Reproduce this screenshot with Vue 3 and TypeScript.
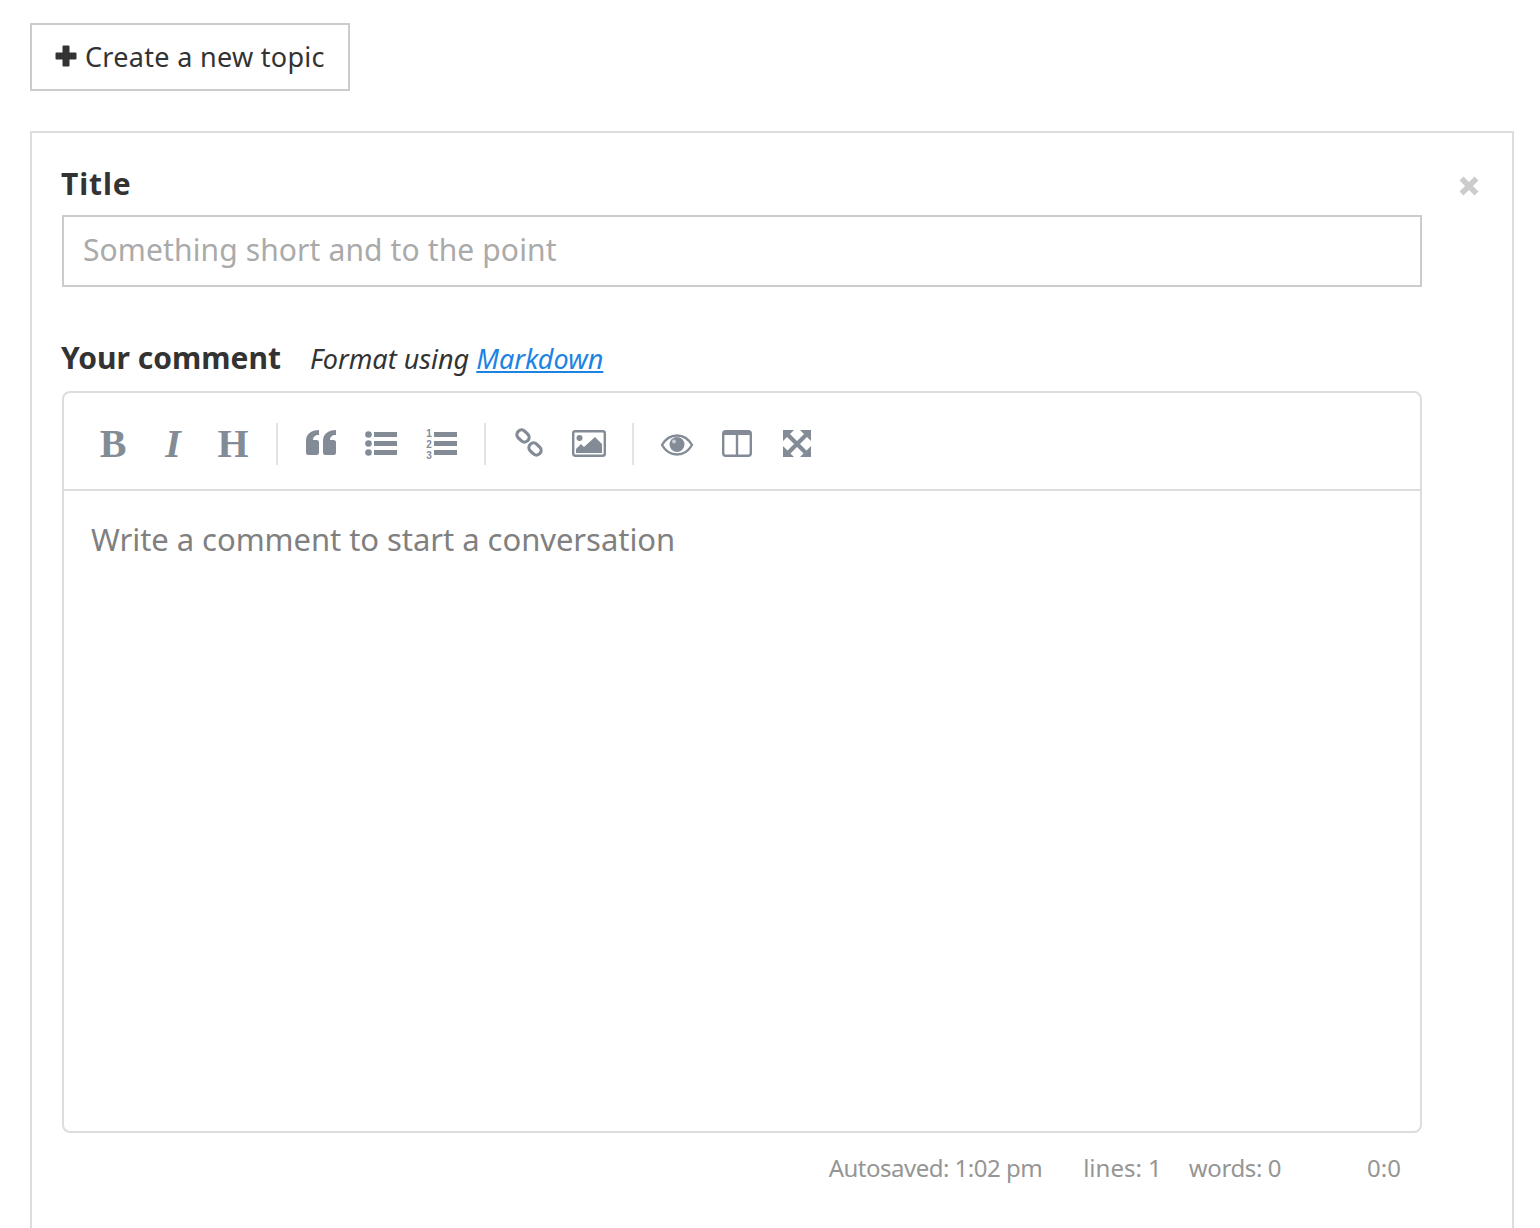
<script setup lang="ts">
const statusItems = [
  { key: 'autosave', text: 'Autosaved: 1:02 pm' },
  { key: 'lines', text: 'lines: 1' },
  { key: 'words', text: 'words: 0' },
  { key: 'cursor', text: '0:0' },
]
</script>

<template>
  <div class="page">
    <button class="new-topic" type="button">
      <svg class="plus" width="22" height="22" viewBox="0 0 22 22">
        <path d="M7.5 1.5a1 1 0 0 1 1-1h5a1 1 0 0 1 1 1v6h6a1 1 0 0 1 1 1v5a1 1 0 0 1-1 1h-6v6a1 1 0 0 1-1 1h-5a1 1 0 0 1-1-1v-6h-6a1 1 0 0 1-1-1v-5a1 1 0 0 1 1-1h6z" fill="#333" />
      </svg>
      <span class="new-topic-text">Create a new topic</span>
    </button>

    <section class="panel">
      <svg class="close" width="20" height="20" viewBox="0 0 20 20">
        <path d="M2.500 2.500l15 15M17.500 2.500l-15 15" stroke="#ccc" stroke-width="5.500" fill="none" />
      </svg>

      <label class="field-label title-label">Title</label>
      <input class="title-input" type="text" placeholder="Something short and to the point" />

      <div class="comment-head">
        <label class="field-label">Your comment</label>
        <em class="hint">Format using <a href="#">Markdown</a></em>
      </div>

      <div class="editor">
        <div class="toolbar">
          <span class="tool glyph bold">B</span>
          <span class="tool glyph italic">I</span>
          <span class="tool glyph bold">H</span>
          <i class="sep"></i>
          <span class="tool">
            <svg width="40" height="40" viewBox="0 0 40 40" fill="#838c96">
              <path d="M18 6v5c-4 0-6 2-6 5h3.500a2.500 2.500 0 0 1 2.500 2.500v10a2.500 2.500 0 0 1-2.500 2.500h-8A2.500 2.500 0 0 1 5 28.500V17C5 10 10 6 18 6z" />
              <path d="M35 6v5c-4 0-6 2-6 5h3.500a2.500 2.500 0 0 1 2.500 2.500v10a2.500 2.500 0 0 1-2.500 2.500h-8a2.500 2.500 0 0 1-2.500-2.500V17C22 10 27 6 35 6z" />
            </svg>
          </span>
          <span class="tool">
            <svg width="40" height="40" viewBox="0 0 40 40" fill="#838c96">
              <circle cx="7.500" cy="10.500" r="3.300" />
              <circle cx="7.500" cy="19.500" r="3.300" />
              <circle cx="7.500" cy="28.500" r="3.300" />
              <rect x="13" y="8" width="23" height="5" />
              <rect x="13" y="17" width="23" height="5" />
              <rect x="13" y="26" width="23" height="5" />
            </svg>
          </span>
          <span class="tool">
            <svg width="40" height="40" viewBox="0 0 40 40" fill="#838c96">
              <text class="num" x="8" y="12.500">1</text>
              <text class="num" x="8" y="23.500">2</text>
              <text class="num" x="8" y="34.500">3</text>
              <rect x="13" y="8" width="23" height="5" />
              <rect x="13" y="17" width="23" height="5" />
              <rect x="13" y="26" width="23" height="5" />
            </svg>
          </span>
          <i class="sep"></i>
          <span class="tool">
            <svg width="40" height="40" viewBox="0 0 40 40" fill="none" stroke="#838c96" stroke-width="3.200">
              <rect x="7.350" y="7.350" width="13.300" height="9.300" rx="4.600" transform="rotate(45 14 12)" />
              <rect x="19.350" y="20.350" width="13.300" height="9.300" rx="4.600" transform="rotate(45 26 25)" />
            </svg>
          </span>
          <span class="tool">
            <svg width="40" height="40" viewBox="0 0 40 40">
              <rect x="4.200" y="7.200" width="31.600" height="24.600" rx="2" fill="none" stroke="#838c96" stroke-width="2.400" />
              <circle cx="10.500" cy="14" r="3" fill="#838c96" />
              <path d="M7 29v-4l5-5 3 3 11-10 7 7v9z" fill="#838c96" />
            </svg>
          </span>
          <i class="sep"></i>
          <span class="tool">
            <svg width="40" height="40" viewBox="0 0 40 40">
              <path d="M5 21C9 14 14 11.500 20 11.500S31 14 35 21C31 28 26 30.500 20 30.500S9 28 5 21z" fill="none" stroke="#838c96" stroke-width="2.400" />
              <circle cx="20" cy="20.500" r="7.500" fill="#838c96" />
              <circle cx="17" cy="17.500" r="2" fill="#c9ced3" />
            </svg>
          </span>
          <span class="tool">
            <svg width="40" height="40" viewBox="0 0 40 40">
              <rect x="6.200" y="7.200" width="27.600" height="24.600" rx="2.500" fill="none" stroke="#838c96" stroke-width="2.400" />
              <rect x="6" y="7" width="28" height="4" fill="#838c96" />
              <rect x="18.800" y="8" width="2.400" height="23" fill="#838c96" />
            </svg>
          </span>
          <span class="tool">
            <svg width="40" height="40" viewBox="0 0 40 40" fill="#838c96">
              <path d="M10 10l20 20M30 10L10 30" stroke="#838c96" stroke-width="4.200" />
              <path d="M6 6h11l-11 11zM34 6H23l11 11zM6 33h11L6 22zM34 33H23l11-11z" />
            </svg>
          </span>
        </div>
        <div class="editor-body">Write a comment to start a conversation</div>
      </div>

      <div class="status">
        <span v-for="item in statusItems" :key="item.key" :class="item.key">{{ item.text }}</span>
      </div>
    </section>
  </div>
</template>

<style scoped>
.page {
  box-sizing: border-box;
  height: 1228px;
  overflow: hidden;
  padding: 23px 26px 0 30px;
  font-family: "Noto Sans", sans-serif;
  color: #333;
}

.new-topic {
  display: flex;
  align-items: center;
  gap: 8px;
  box-sizing: border-box;
  width: 320px;
  height: 68px;
  padding: 0 0 2px 23px;
  background: #fff;
  border: 2px solid #ccc;
  font: inherit;
  font-size: 27px;
  letter-spacing: 0.3px;
  color: #333;
}

.plus {
  flex: none;
}

.panel {
  position: relative;
  box-sizing: border-box;
  height: 1200px;
  margin-top: 40px;
  padding: 31px 90px 0 30px;
  border: 2px solid #ddd;
}

.close {
  position: absolute;
  top: 43px;
  right: 33px;
}

.field-label {
  display: block;
  font-size: 30px;
  line-height: 40px;
  font-weight: 700;
  color: #333;
}

.title-label {
  margin-left: -1px;
  margin-bottom: 11px;
  letter-spacing: 0.9px;
}

.title-input {
  display: block;
  box-sizing: border-box;
  width: 1360px;
  height: 72px;
  padding: 0 19px 3px;
  border: 2px solid #ccc;
  outline: none;
  font: inherit;
  font-size: 30px;
  letter-spacing: 0.12px;
  color: #333;
}

.title-input::placeholder {
  color: #aaa;
  opacity: 1;
}

.comment-head {
  display: flex;
  align-items: baseline;
  gap: 29px;
  margin: 51px 0 13px -1px;
}

.hint {
  font-size: 27px;
  color: #333;
}

.hint a {
  color: #1c83e3;
}

.editor {
  box-sizing: border-box;
  width: 1360px;
  height: 742px;
  border: 2px solid #ddd;
  border-radius: 8px;
}

.toolbar {
  display: flex;
  align-items: center;
  box-sizing: border-box;
  height: 98px;
  padding: 6px 0 0 19px;
  border-bottom: 2px solid #ddd;
}

.tool {
  display: flex;
  align-items: center;
  justify-content: center;
  width: 60px;
  height: 40px;
}

.glyph {
  padding-bottom: 2px;
  box-sizing: border-box;
  font-family: "Liberation Serif", serif;
  font-size: 40px;
  color: #838c96;
}

.bold {
  font-weight: 700;
}

.italic {
  font-style: italic;
  font-weight: 700;
}

.sep {
  flex: none;
  width: 2px;
  height: 42px;
  margin: 0 13px;
  background: #e3e3e3;
}

.num {
  font-family: "Liberation Sans", sans-serif;
  font-size: 10px;
  font-weight: 700;
  text-anchor: middle;
}

.editor-body {
  padding: 26px 27px 0;
  font-size: 31px;
  letter-spacing: -0.05px;
  line-height: 44px;
  color: #808080;
}

.status {
  display: flex;
  justify-content: flex-end;
  width: 1339px;
  margin-top: 17px;
  font-size: 24px;
  line-height: 36px;
  color: #959694;
}

.autosave {
  letter-spacing: -0.5px;
}

.lines {
  margin-left: 41px;
}

.words {
  margin-left: 27px;
  letter-spacing: -0.4px;
}

.cursor {
  margin-left: 86px;
}
</style>
